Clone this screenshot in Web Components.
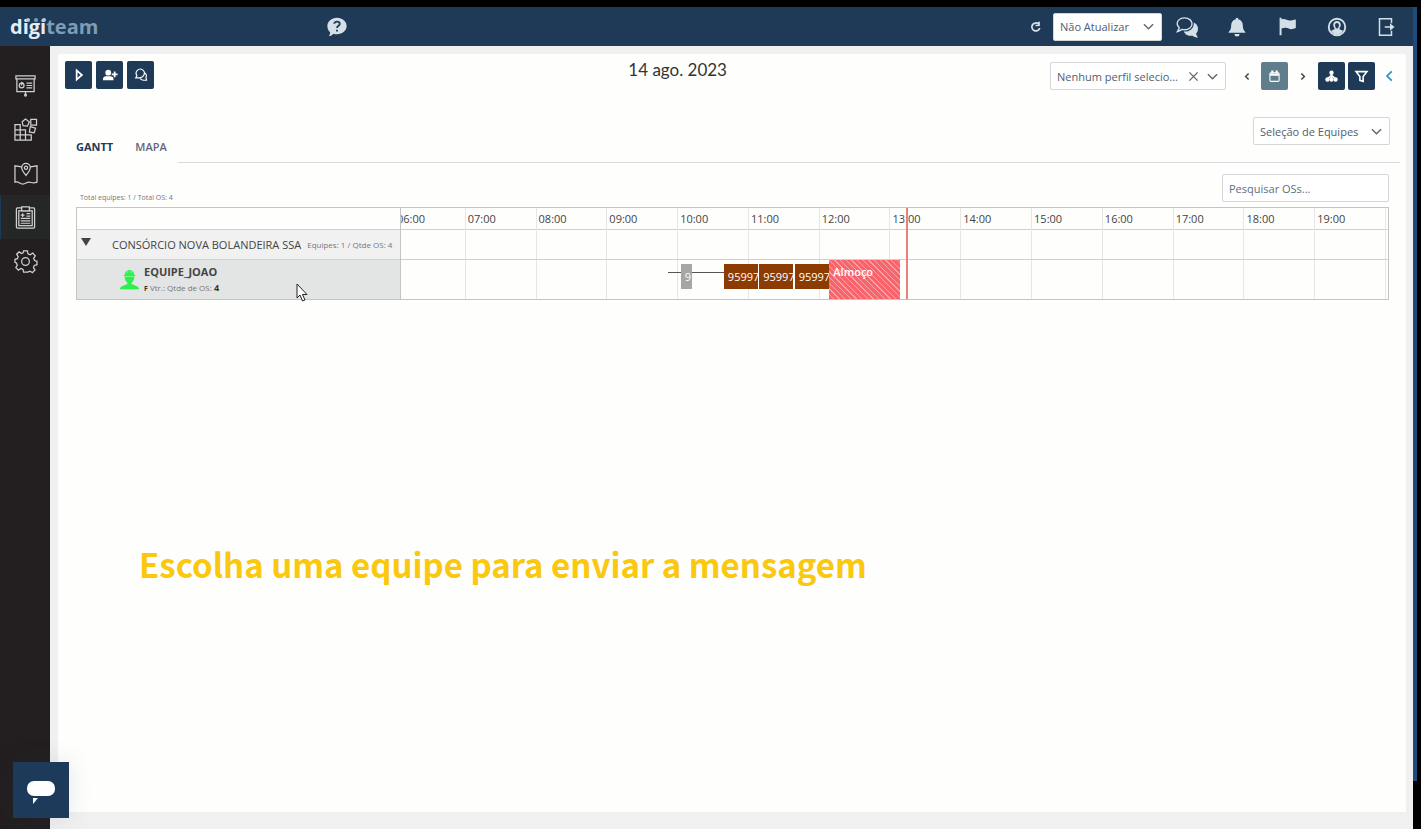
<!DOCTYPE html>
<html lang="pt-BR">
<head>
<meta charset="utf-8">
<meta name="viewport" content="width=device-width, initial-scale=1">
<title>digiteam</title>
<style>
  body {
    margin: 0;
    background: #000;
    color: #444;
    font-family: "Open Sans", "Noto Sans", sans-serif;
    font-size: 11px;
  }
</style>
</head>
<body>
<digi-app>
  <digi-header slot="header"></digi-header>
  <digi-sidebar slot="sidebar"></digi-sidebar>
  <digi-toolbar date="14 ago. 2023"></digi-toolbar>
  <digi-tabs></digi-tabs>
  <digi-gantt></digi-gantt>
</digi-app>
<digi-caption>Escolha uma equipe para enviar a mensagem</digi-caption>
<digi-pointer></digi-pointer>
<digi-chat></digi-chat>

<script>
  const ICONS = {
    play: '<path d="M8 4v16l9-8z"/>',
    userPlus: '<g fill="currentColor" stroke="none"><circle cx="9" cy="8" r="5"/><path d="M0 21v-2c0-3 2-5 5-5h8c3 0 5 2 5 5v2z"/></g><path d="M20 6v10M15 11h10" stroke-width="3"/>',
    chats: '<path d="M6 17H3l2-4a7 7 0 1 1 12-1c-2 4-6 5-11 5zM18 8c3 2 4 5 2.500 8l1 5h-5c-3 0-5-1-6-4"/>',
    calendar: '<rect x="3.500" y="5" width="17" height="16" rx="2"/><path d="M4 8.500h16M8 1v5M16 1v5" stroke-width="4"/>',
    sitemap: '<path d="M12 6v10M5 16l7-6 7 6" stroke-width="3"/><g fill="currentColor" stroke="none"><circle cx="12" cy="5" r="4"/><circle cx="4.500" cy="17.500" r="4"/><circle cx="12" cy="17.500" r="4"/><circle cx="19.500" cy="17.500" r="4"/></g>',
    filter: '<path d="M2 3h20l-7 9v9l-6-2v-7z"/>',
    left: '<path d="M15 4l-8 8 8 8"/>',
    right: '<path d="M9 4l8 8-8 8"/>',
    down: '<path d="M2 7l10 10L22 7"/>',
    close: '<path d="M3 3l18 18M21 3L3 21"/>',
    reload: '<path d="M19.500 14a8 8 0 1 1-3-8.500M11 9l7-.5V1.500" stroke-width="3.500"/>',
    help: '<path fill="currentColor" stroke="none" d="M12 2c6 0 10.500 4 10.500 9S18 20 12 20c-1.500 0-3-.2-4-.6C6.500 21.500 4 22 3 22c1-1.200 1.600-2.700 1.500-4.200C2.500 16 1.500 13.700 1.500 11 1.500 6 6 2 12 2z"/><path stroke="#1e3a56" d="M9 8.500C9 5.300 15 5.500 15 8.600c0 2-3 2.200-3 4.600M12 15v2"/>',
    messages: '<path fill="currentColor" stroke="none" d="M16 6.500c5 0 8 3.500 8 7.500 0 2-.8 4-2 5.200 0 1.500 1 3 2 4.300-2.500 0-4.500-.7-6-2-6 1-10-2.500-10-7.500s3-7.500 8-7.500z"/><path stroke="#1e3a56" stroke-width="4" fill="#1e3a56" d="M9.500 2C14 2 17.500 5 17.500 8.500S14 15 9.500 15c-1 0-2-.1-3-.4C5 15.600 3.500 16 2 16c.8-1 1.400-2.200 1.500-3.500-4.500-4-1.500-10.500 6-10.500z"/><path stroke-width="1.500" d="M9.500 2C14 2 17.500 5 17.500 8.500S14 15 9.500 15c-1 0-2-.1-3-.4C5 15.600 3.500 16.500 1.500 17c1-1.400 1.800-2.900 2-4.500C-1 8.500 2 2 9.500 2z"/>',
    bell: '<g fill="currentColor" stroke="none"><path d="M12 1a1.500 1.500 0 0 1 1.500 1.800C17 3.600 19 6.500 19 10c0 5 1.500 6.500 3 8v1H2v-1c1.500-1.500 3-3 3-8 0-3.500 2-6.400 5.500-7.200A1.500 1.500 0 0 1 12 1z"/><path d="M9 20.500h6a3 3 0 0 1-6 0z"/></g>',
    flag: '<path fill="currentColor" stroke="none" d="M2 1h2.500v2c4-1.500 7 1.500 10 1.500 2.500 0 5-1 8-1.500v11c-6 2.500-8 1-11 0-2.500-.8-4.500-.5-7 .5V23H2z"/>',
    user: '<circle cx="12" cy="12" r="11" stroke-width="2.500"/><path fill="currentColor" stroke="none" fill-rule="evenodd" d="M12 4c3 0 5 2.200 5 5 0 2-.8 3.800-2 5 0 1.500 3 1.800 5 3-2 3.500-5 5-8 5s-6-1.500-8-5c2-1.200 5-1.500 5-3-1.200-1.200-2-3-2-5 0-2.800 2-5 5-5zm0 2.500c-2 0-2.800 1.500-2.600 3C9.700 12 10.700 14 12 14s2.300-2 2.600-4.500c.2-1.500-.6-3-2.600-3z"/>',
    exit: '<path d="M18 7V1H2v22h16v-6M9 12h11"/><path fill="currentColor" stroke="none" d="M16 7l6 5-6 5z"/>',
    board: '<path d="M2 2h20v3H2zM3 5v13.500h18V5M12 18.500V22"/><circle cx="12" cy="22" r="1"/><circle cx="8" cy="12" r="2.500"/><path d="M8 12V9l2 1M13 9.500h6M13 12h6M13 14.500h6"/>',
    blocks: '<path d="M1 7h5.500v16H1zM1 12.500h11V23H1zM1 17.500h17V23H6.500V12.500M12 17.500V23M17.500 1.500h6v6h-6zM12 1l4 3-2 4.500-4.500-.5-1-4zM17 9l5.500 1.500-1.500 5-5-1z"/>',
    map: '<path d="M8 5L1 4v17c4-1 5 2 8 2s4-2 6.500-2 4 2 8.500 0V4l-7 1M12.500 14C10 11 8 8.500 8 6a4.500 4.500 0 0 1 9 0c0 2.500-2 5-4.500 8z"/><circle cx="12.500" cy="6" r="1.700"/>',
    clipboard: '<rect x="2.500" y="2" width="19" height="21" rx="1"/><rect x="5" y="5" width="14" height="15.500"/><path fill="#231f20" d="M8 1h8v4H8z"/><path d="M13 8h4M13 10.500h4M7 13h10M7 15.500h10M7 18h10M9 7.500v4M7 9.500h4"/>',
    gear: '<circle cx="12" cy="12" r="4"/><path d="M10 1h4l.6 3 2.200 1 2.700-1.700 2.700 2.800-1.700 2.600 1 2.300 2.500.8v3.500l-2.800.8-.9 2.300 1.600 2.500-2.700 2.700-2.600-1.600-2.200 1L14 23h-4l-.6-2.700-2.200-1L4.600 21l-2.700-2.700L3.500 15.800l-1-2.300-1.500-.6V9.700L3.600 9l.8-2.100L2.700 4.400 5.400 2l2.400 1.700L9.500 3z"/>',
    worker: '<path fill="currentColor" stroke="none" d="M12 1c3 0 5 2 5.500 5.500l1 .5v1.500h-1C17.500 12 16 14.500 14.500 15.500V17c2 1.500 8 1.500 8.500 6H1c.5-4.500 6.500-4.500 8.500-6v-1.500C8 14.500 6.500 12 6.500 8.500h-1V7l1-.5C7 3 9 1 12 1z"/><path stroke="#fff" stroke-width="1" opacity=".5" d="M6 8.500h12M10 2v3M14 2v3"/>'
  };

  class DigiIcon extends HTMLElement {
    constructor() {
      super();
      this.attachShadow({ mode: "open" });
    }

    connectedCallback() {
      const size = this.getAttribute("size") || 14;
      const stroke = this.getAttribute("stroke") || 2;
      this.shadowRoot.innerHTML = /*html*/ `
      <style>
        :host { display: inline-flex; flex: none; pointer-events: none; }
        svg { display: block; overflow: visible; }
      </style>
      <svg width="${size}" height="${size}" viewBox="0 0 24 24" fill="none" stroke="currentColor"
        stroke-width="${stroke}" aria-hidden="true">${ICONS[this.getAttribute("name")]}</svg>
      `;
    }
  }

  class DigiButton extends HTMLElement {
    constructor() {
      super();
      this.attachShadow({ mode: "open" });
    }

    connectedCallback() {
      this.shadowRoot.innerHTML = /*html*/ `
      <style>
        :host { display: inline-flex; }
        button {
          display: flex;
          align-items: center;
          justify-content: center;
          width: 27px;
          height: 28px;
          padding: 0;
          border: 0;
          border-radius: 2px;
          background: #1e3a56;
          color: #fff;
          cursor: pointer;
        }
        :host([tone="muted"]) button { background: #5f7d8a; }
        :host([tone="plain"]) button { width: 26px; background: none; color: inherit; }
      </style>
      <button type="button" aria-label="${this.getAttribute("label")}">
        <digi-icon name="${this.getAttribute("icon")}" size="${this.getAttribute("size") || 13}"
          stroke="${this.getAttribute("stroke") || 3}"></digi-icon>
      </button>
      `;
    }
  }

  class DigiSelect extends HTMLElement {
    constructor() {
      super();
      this.attachShadow({ mode: "open" });
    }

    connectedCallback() {
      const clear = this.hasAttribute("clearable")
        ? '<button type="button" aria-label="Limpar"><digi-icon name="close" size="11" stroke="3"></digi-icon></button>'
        : "";
      this.shadowRoot.innerHTML = /*html*/ `
      <style>
        :host { display: inline-grid; align-items: center; height: 28px; }
        select {
          grid-area: 1 / 1;
          width: 100%;
          height: 100%;
          box-sizing: border-box;
          padding: 0 6px;
          appearance: none;
          border: 1px solid #d4d7da;
          border-radius: 2px;
          background: #fff;
          color: #506070;
          font: inherit;
        }
        .marks {
          grid-area: 1 / 1;
          justify-self: end;
          display: flex;
          gap: 8px;
          padding-right: 8px;
          color: #666;
          pointer-events: none;
        }
        button { display: flex; padding: 0; border: 0; background: none; color: inherit; pointer-events: auto; }
      </style>
      <select aria-label="${this.getAttribute("label")}"><option>${this.getAttribute("value")}</option></select>
      <span class="marks">${clear}<digi-icon name="down" size="11" stroke="3"></digi-icon></span>
      `;
    }
  }

  class DigiApp extends HTMLElement {
    constructor() {
      super();
      this.attachShadow({ mode: "open" });
    }

    connectedCallback() {
      this.shadowRoot.innerHTML = /*html*/ `
      <style>
        :host {
          display: flex;
          height: 100vh;
          box-sizing: border-box;
          padding: 7px 4px 0 0;
          background: #000;
        }
        .window { flex: 1; min-width: 0; display: flex; flex-direction: column; background: #f0f0f0; }
        .edge { width: 4px; margin-bottom: 48px; background: #1f4a7c; }
        .body { flex: 1; display: flex; min-height: 0; }
        main {
          flex: 1;
          min-width: 0;
          box-sizing: border-box;
          margin: 8px 7px 17px 8px;
          padding: 7px 6px 0 7px;
          background: #fefefd;
        }
      </style>
      <div class="window">
        <slot name="header"></slot>
        <div class="body">
          <slot name="sidebar"></slot>
          <main><slot></slot></main>
        </div>
      </div>
      <div class="edge"></div>
      `;
    }
  }

  class DigiHeader extends HTMLElement {
    constructor() {
      super();
      this.attachShadow({ mode: "open" });
    }

    connectedCallback() {
      this.shadowRoot.innerHTML = /*html*/ `
      <style>
        :host {
          display: flex;
          align-items: center;
          height: 39px;
          background: #1e3a56;
          color: #d5dfe8;
        }
        .logo {
          position: relative;
          width: 314px;
          padding-left: 10px;
          color: #e4edf5;
          font: 700 20px/30px "Open Sans", sans-serif;
          text-decoration: none;
        }
        .logo span { color: #7f9cb7; }
        .logo svg { position: absolute; left: 25px; top: 5px; }
        nav { display: flex; align-items: center; margin-left: auto; padding-right: 13px; }
        nav digi-button { margin-left: 24px; }
        digi-select { width: 109px; margin-left: 4px; }
        digi-select + digi-button { margin-left: 12px; }
      </style>
      <a class="logo" href="#">digi<span>team</span>
        <svg width="22" height="6" aria-hidden="true"><circle cx="3" cy="3" r="2" fill="#b7cadb"/>
          <circle cx="11" cy="3" r="2" fill="#7f9cb7"/><circle cx="19" cy="3" r="2" fill="#b7cadb"/></svg>
      </a>
      <digi-button tone="plain" icon="help" size="22" stroke="2" label="Ajuda"></digi-button>
      <nav>
        <digi-button tone="plain" icon="reload" size="12" label="Recarregar"></digi-button>
        <digi-select label="Atualização" value="Não Atualizar"></digi-select>
        <digi-button tone="plain" icon="messages" size="22" label="Mensagens"></digi-button>
        <digi-button tone="plain" icon="bell" size="20" label="Notificações"></digi-button>
        <digi-button tone="plain" icon="flag" size="19" label="Alertas"></digi-button>
        <digi-button tone="plain" icon="user" size="18" label="Usuário"></digi-button>
        <digi-button tone="plain" icon="exit" size="18" stroke="2" label="Sair"></digi-button>
      </nav>
      `;
    }
  }

  class DigiSidebar extends HTMLElement {
    constructor() {
      super();
      this.attachShadow({ mode: "open" });
    }

    connectedCallback() {
      const items = [
        ["board", "Painel"],
        ["blocks", "Módulos"],
        ["map", "Mapa"],
        ["clipboard", "Ordens de serviço"],
        ["gear", "Configurações"]
      ];
      this.shadowRoot.innerHTML = /*html*/ `
      <style>
        :host { display: block; width: 50px; padding-top: 17px; background: #231f20; }
        a {
          display: flex;
          align-items: center;
          justify-content: center;
          height: 44px;
          color: #d0d0d0;
        }
        a.active { background: #252727; box-shadow: inset 1px 0 #1e3a56; }
      </style>
      ${items.map(([icon, label]) => `
        <a href="#" aria-label="${label}" class="${icon === "clipboard" ? "active" : ""}">
          <digi-icon name="${icon}" size="23" stroke="1.300"></digi-icon>
        </a>`).join("")}
      `;
    }
  }

  class DigiToolbar extends HTMLElement {
    constructor() {
      super();
      this.attachShadow({ mode: "open" });
    }

    connectedCallback() {
      this.shadowRoot.innerHTML = /*html*/ `
      <style>
        :host { display: grid; grid-template-columns: 18% 1fr auto; }
        .actions { display: flex; gap: 4px; }
        h1 { margin: 0; color: #333; font: 400 17px/18px Lato, sans-serif; text-align: center; }
        .filters { display: flex; align-items: center; padding-top: 1px; }
        .filters digi-select { width: 176px; margin-right: 8px; }
        .filters > [tone="muted"] { margin: 0 1px; }
        .pair { display: flex; gap: 3px; margin-left: 3px; }
        .collapse { color: #2f8fc8; margin-left: 2px; margin-right: -3px; }
      </style>
      <div class="actions">
        <digi-button icon="play" size="14" label="Iniciar"></digi-button>
        <digi-button icon="userPlus" size="14" label="Adicionar equipe"></digi-button>
        <digi-button icon="chats" size="14" stroke="2" label="Enviar mensagem"></digi-button>
      </div>
      <h1>${this.getAttribute("date")}</h1>
      <div class="filters">
        <digi-select clearable label="Perfil" value="Nenhum perfil selecio..."></digi-select>
        <digi-button tone="plain" icon="left" size="9" stroke="4" label="Dia anterior"></digi-button>
        <digi-button tone="muted" icon="calendar" stroke="2" label="Calendário"></digi-button>
        <digi-button tone="plain" icon="right" size="9" stroke="4" label="Próximo dia"></digi-button>
        <div class="pair">
          <digi-button icon="sitemap" label="Hierarquia"></digi-button>
          <digi-button icon="filter" label="Filtrar"></digi-button>
        </div>
        <digi-button class="collapse" tone="plain" icon="left" size="14" label="Recolher"></digi-button>
      </div>
      `;
    }
  }

  class DigiTabs extends HTMLElement {
    constructor() {
      super();
      this.attachShadow({ mode: "open" });
    }

    connectedCallback() {
      this.shadowRoot.innerHTML = /*html*/ `
      <style>
        :host { display: flex; align-items: flex-end; margin-top: 27px; }
        .tabs { display: flex; }
        button {
          height: 34px;
          padding: 0 11px;
          border: 0;
          background: none;
          color: #666677;
          font: inherit;
          font-weight: 600;
        }
        button[aria-selected="true"] { color: #1e3a56; font-weight: 700; }
        .rest {
          flex: 1;
          display: flex;
          justify-content: flex-end;
          padding: 0 10px 17px 0;
          border-bottom: 1px solid #d9dbdd;
        }
        digi-select { width: 137px; }
      </style>
      <div class="tabs" role="tablist">
        <button type="button" role="tab" aria-selected="true">GANTT</button>
        <button type="button" role="tab" aria-selected="false">MAPA</button>
      </div>
      <div class="rest"><digi-select label="Equipes" value="Seleção de Equipes"></digi-select></div>
      `;
    }
  }

  class DigiGantt extends HTMLElement {
    constructor() {
      super();
      this.attachShadow({ mode: "open" });
    }

    connectedCallback() {
      const hours = Array.from({ length: 14 }, (_, i) => String(i + 6).padStart(2, "0") + ":00");
      const cells = hours.map(() => "<i></i>").join("") + "<i></i>";
      this.shadowRoot.innerHTML = /*html*/ `
      <style>
        :host { display: block; padding: 11px 11px 0 11px; }
        .top { display: flex; align-items: flex-end; justify-content: space-between; margin-bottom: 5px; }
        .small { color: #777; font-size: 8px; line-height: 10px; }
        .top .small { padding-left: 4px; font-size: 7px; line-height: 8px; }
        input {
          width: 167px;
          height: 28px;
          box-sizing: border-box;
          padding: 0 6px;
          border: 1px solid #d4d7da;
          border-radius: 2px;
          background: #fff;
          font: inherit;
        }
        input::placeholder { color: #607080; }
        .chart { display: flex; border: 1px solid #c4c4c4; }
        .teams { width: 324px; box-sizing: border-box; border-right: 1px solid #c4c4c4; }
        .row { box-sizing: border-box; border-top: 1px solid #d0d0d0; }
        .head { height: 21px; }
        .group { height: 30px; }
        .team { height: 40px; }
        .teams .row { display: flex; align-items: center; }
        .teams .group { gap: 6px; background: #f1f1f1; }
        .teams .team { padding-left: 42px; gap: 4px; background: #e3e5e4; }
        .toggle {
          align-self: flex-start;
          width: 29px;
          height: 22px;
          padding: 0 0 0 4px;
          border: 0;
          background: none;
          text-align: left;
        }
        .worker { color: #2cf04c; }
        .team strong { display: block; line-height: 18px; }
        .team .small { display: block; line-height: 14px; }
        .small b { color: #333; font-size: 9px; }
        .small .kind { font-size: 7px; }
        .timeline { flex: 1; min-width: 0; overflow: hidden; }
        /* the first hour starts slightly before the visible range */
        .scroll { position: relative; margin-left: -7px; }
        .hours { display: grid; grid-template-columns: repeat(14, 1fr) 3px; }
        .hours span { padding-left: 2px; line-height: 22px; border-left: 1px solid #e6e6e6; }
        i { border-left: 1px solid #e6e6e6; }
        .bars { position: absolute; inset: 0 3px 0 0; }
        .bars div {
          position: absolute;
          left: calc((var(--from) - 6) / 14 * 100%);
          width: calc(var(--span) / 14 * 100%);
          box-sizing: border-box;
          overflow: hidden;
          white-space: nowrap;
        }
        .bars .os { top: 56px; height: 25px; padding-left: 4px; background: #8c3b02; color: #fff; line-height: 26px; }
        .bars .done { background: #a6a6a6; }
        .bars .route { top: 64px; height: 1px; background: #555; }
        .bars .lunch {
          top: 52px;
          height: 39px;
          padding-left: 4px;
          background: repeating-linear-gradient(45deg, #f8646c 0 3px, #fba0a4 3px 4px);
          color: #fff;
          font-weight: 600;
          line-height: 24px;
        }
        .bars .now { top: 0; bottom: 0; width: 2px; background: #ea8078; }
      </style>
      <div class="top">
        <span class="small">Total equipes: 1 / Total OS: 4</span>
        <input type="search" aria-label="Pesquisar OSs" placeholder="Pesquisar OSs...">
      </div>
      <div class="chart">
        <div class="teams">
          <div class="head"></div>
          <div class="row group">
            <button class="toggle" type="button" aria-label="Recolher grupo" aria-expanded="true">
              <svg width="10" height="8" aria-hidden="true"><path d="M0 0h10L5 8z" fill="#444"/></svg>
            </button>
            <span>CONSÓRCIO NOVA BOLANDEIRA SSA</span>
            <span class="small">Equipes: 1 / Qtde OS: 4</span>
          </div>
          <div class="row team">
            <digi-icon class="worker" name="worker" size="21"></digi-icon>
            <div>
              <strong>EQUIPE_JOAO</strong>
              <span class="small"><b class="kind">F</b> Vtr.: Qtde de OS: <b>4</b></span>
            </div>
          </div>
        </div>
        <div class="timeline">
          <div class="scroll">
            <div class="head hours">${hours.map((h) => `<span>${h}</span>`).join("")}<i></i></div>
            <div class="row group hours">${cells}</div>
            <div class="row team hours">${cells}</div>
            <div class="bars">
              <div class="route" style="--from: 9.87; --span: .8"></div>
              <div class="os done" style="--from: 10.05; --span: .16">9</div>
              <div class="os" style="--from: 10.66; --span: .48">95997</div>
              <div class="os" style="--from: 11.16; --span: .48">95997</div>
              <div class="os" style="--from: 11.66; --span: .48">95997</div>
              <div class="lunch" style="--from: 12.15; --span: 1">Almoço</div>
              <div class="now" style="--from: 13.24"></div>
            </div>
          </div>
        </div>
      </div>
      `;
    }
  }

  class DigiCaption extends HTMLElement {
    constructor() {
      super();
      this.attachShadow({ mode: "open" });
    }

    connectedCallback() {
      this.shadowRoot.innerHTML = /*html*/ `
      <style>
        :host {
          display: block;
          position: absolute;
          left: 139px;
          top: 540px;
          color: #fac80f;
          font: bold 33px/48px "Noto Sans CJK JP", sans-serif;
          white-space: nowrap;
        }
      </style>
      <slot></slot>
      `;
    }
  }

  class DigiPointer extends HTMLElement {
    constructor() {
      super();
      this.attachShadow({ mode: "open" });
    }

    connectedCallback() {
      this.shadowRoot.innerHTML = /*html*/ `
      <style>
        :host { display: block; position: absolute; left: 296px; top: 283px; pointer-events: none; }
      </style>
      <svg width="13" height="20" viewBox="0 0 13 20" aria-hidden="true">
        <path d="M1 1v14l3-3 2.500 6 2.500-1-2.500-5.500H11z" fill="#fff" stroke="#222"/>
      </svg>
      `;
    }
  }

  class DigiChat extends HTMLElement {
    constructor() {
      super();
      this.attachShadow({ mode: "open" });
    }

    connectedCallback() {
      this.shadowRoot.innerHTML = /*html*/ `
      <style>
        :host { display: block; position: fixed; left: 13px; bottom: 11px; }
        button {
          display: flex;
          align-items: center;
          justify-content: center;
          width: 56px;
          height: 56px;
          padding: 4px 0 0;
          border: 0;
          background: #1e3a5a;
          box-shadow: 0 0 24px rgba(30, 58, 90, .12);
        }
      </style>
      <button type="button" aria-label="Abrir chat">
        <svg width="28" height="23" aria-hidden="true">
          <rect width="28" height="15" rx="7" fill="#fff"/><path d="M6 17h5l-5 6z" fill="#fff"/>
        </svg>
      </button>
      `;
    }
  }

  customElements.define("digi-icon", DigiIcon);
  customElements.define("digi-button", DigiButton);
  customElements.define("digi-select", DigiSelect);
  customElements.define("digi-app", DigiApp);
  customElements.define("digi-header", DigiHeader);
  customElements.define("digi-sidebar", DigiSidebar);
  customElements.define("digi-toolbar", DigiToolbar);
  customElements.define("digi-tabs", DigiTabs);
  customElements.define("digi-gantt", DigiGantt);
  customElements.define("digi-caption", DigiCaption);
  customElements.define("digi-pointer", DigiPointer);
  customElements.define("digi-chat", DigiChat);
</script>
</body>
</html>
